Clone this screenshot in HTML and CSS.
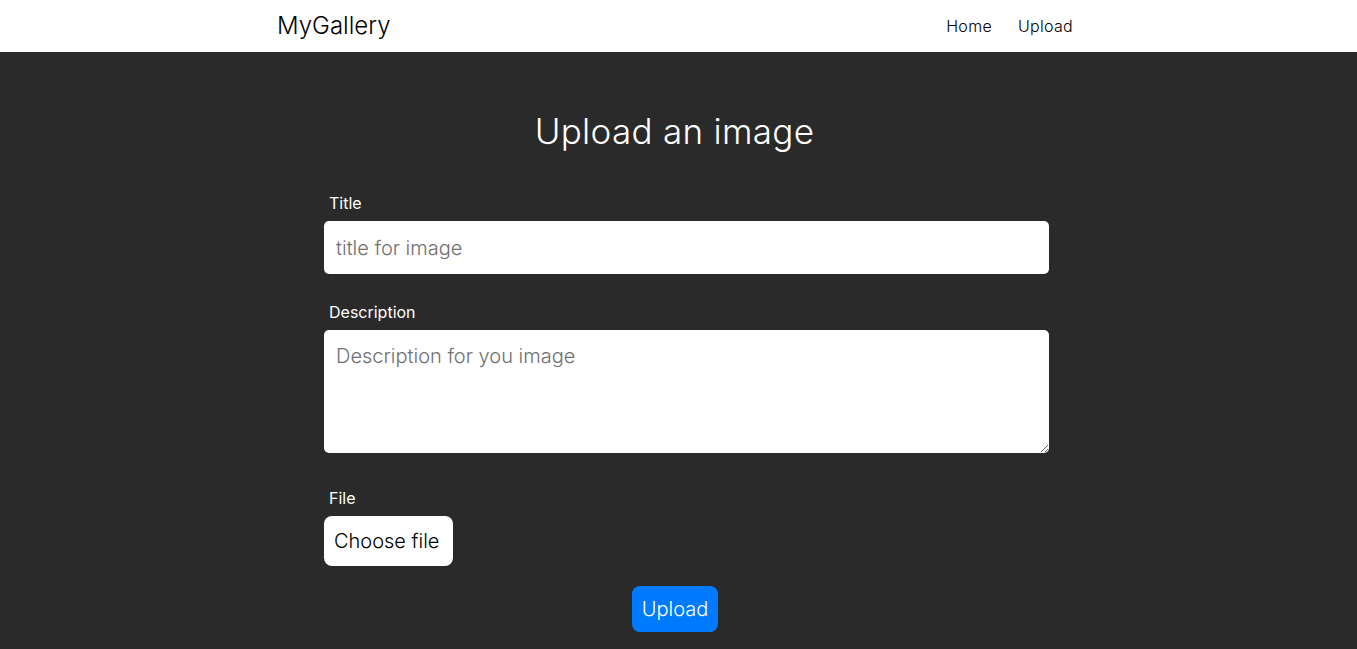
FILE: index.html
```html
<!DOCTYPE html>
<html lang="en">
<head>
<meta charset="utf-8">
<title>MyGallery - Upload</title>
<link rel="stylesheet" href="styles.css">
</head>
<body>
<header class="navbar">
  <div class="nav-inner">
    <a class="brand" href="#">MyGallery</a>
    <nav class="links">
      <a href="#">Home</a>
      <a href="#">Upload</a>
    </nav>
  </div>
</header>
<main class="page">
  <h1 class="heading">Upload an image</h1>
  <form class="form">
    <div class="field">
      <label class="label" for="title">Title</label>
      <input class="input" id="title" type="text" placeholder="title for image">
    </div>
    <div class="field">
      <label class="label" for="desc">Description</label>
      <textarea class="textarea" id="desc" placeholder="Description for you image"></textarea>
    </div>
    <div class="field field-file">
      <label class="label" for="file">File</label>
      <span class="file-btn">Choose file</span>
    </div>
    <div class="actions">
      <button class="submit" type="button">Upload</button>
    </div>
  </form>
</main>
</body>
</html>
```
FILE: styles.css
```css
* { box-sizing: border-box; }
html, body { margin: 0; padding: 0; }
body {
  font-family: Inter, "Noto Sans", sans-serif;
  font-weight: 300;
  background: #2a2a2a;
  color: #fff;
}
.navbar {
  background: #fff;
  height: 52px;
}
.nav-inner {
  width: 803px;
  margin: 0 auto;
  padding-right: 7px;
  height: 100%;
  display: flex;
  align-items: center;
  justify-content: space-between;
}
.brand {
  color: #000;
  text-decoration: none;
  font-size: 24px;
  font-weight: 300;
  margin-top: -2px;
}
.links {
  display: flex;
  gap: 26px;
}
.links a {
  color: #000;
  text-decoration: none;
  font-size: 16px;
  font-weight: 300;
  letter-spacing: 0.3px;
}
.page {
  padding: 55px 0 20px;
}
.heading {
  margin: 0 0 37px;
  text-align: center;
  font-weight: 300;
  font-size: 35px;
  line-height: 48px;
  letter-spacing: 0.3px;
  padding-right: 8px;
}
.form {
  width: 725px;
  margin: 0 0 0 324px;
}
.field {
  display: flex;
  flex-direction: column;
  margin-bottom: 27px;
}
.field-file { margin-bottom: 20px; }
.label {
  font-size: 16px;
  font-weight: 400;
  padding-left: 5px;
  line-height: 22px;
  margin-bottom: 7px;
}
.input, .textarea {
  width: 100%;
  border: none;
  border-radius: 5px;
  background: #fff;
  font-family: inherit;
  font-weight: 300;
  font-size: 20px;
  color: #000;
  padding: 0 12px;
}
.input { height: 53px; }
.textarea {
  height: 123px;
  padding-top: 14px;
  resize: vertical;
  display: block;
}
.input::placeholder, .textarea::placeholder { color: #707070; }
.field-file .label { margin-top: 7px; }
.file-btn {
  align-self: flex-start;
  background: #fff;
  color: #000;
  border-radius: 8px;
  height: 50px;
  padding: 0 14px 0 10px;
  display: flex;
  align-items: center;
  font-size: 20px;
}
.actions {
  display: flex;
  justify-content: center;
  width: 702px;
}
.submit {
  background: #007bff;
  color: #fff;
  border: none;
  border-radius: 8px;
  height: 46px;
  padding: 0 10px;
  font-family: inherit;
  font-weight: 300;
  font-size: 20px;
}
```
